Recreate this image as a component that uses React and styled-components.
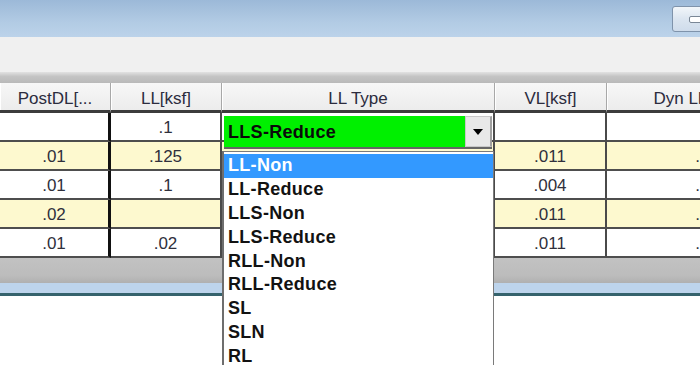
import React from 'react'
import styled, { createGlobalStyle } from 'styled-components'

const GlobalStyle = createGlobalStyle`
  html, body {
    margin: 0;
    padding: 0;
    background: #ffffff;
    overflow: hidden;
  }
  body {
    font-family: 'Liberation Sans', Arial, sans-serif;
  }
`

const columns = [
  { key: 'post', title: 'PostDL[...', width: 111, edge: '3px solid #111' },
  { key: 'll', title: 'LL[ksf]', width: 111, edge: '2px solid #4a4a4a' },
  { key: 'type', title: 'LL Type', width: 273, edge: '2px solid #4a4a4a' },
  { key: 'vl', title: 'VL[ksf]', width: 112, edge: '2px solid #4a4a4a' },
  { key: 'dyn', title: 'Dyn LL Factor', width: 200, edge: 'none' },
]

const rows = [
  { post: '', ll: '.1', type: '', vl: '', dyn: '' },
  { post: '.01', ll: '.125', type: '', vl: '.011', dyn: '.01' },
  { post: '.01', ll: '.1', type: '', vl: '.004', dyn: '.01' },
  { post: '.02', ll: '', type: '', vl: '.011', dyn: '.01' },
  { post: '.01', ll: '.02', type: '', vl: '.011', dyn: '.01' },
]

const llTypes = [
  'LL-Non',
  'LL-Reduce',
  'LLS-Non',
  'LLS-Reduce',
  'RLL-Non',
  'RLL-Reduce',
  'SL',
  'SLN',
  'RL',
]

const App = () => {
  const template = columns.map((c) => `${c.width}px`).join(' ')
  return (
    <>
      <GlobalStyle />
      <Window>
        <TitleBar>
          <MinButton>
            <Dash />
          </MinButton>
        </TitleBar>
        <Toolbar />
        <Splitter />

        <Grid $template={template}>
          {columns.map((c) => (
            <HeaderCell key={c.key} $edge={c.edge}>
              {c.title}
            </HeaderCell>
          ))}
          {rows.map((row, i) =>
            columns.map((c) => (
              <Cell key={`${i}-${c.key}`} $edge={c.edge} $alt={i % 2 === 1}>
                {row[c.key]}
              </Cell>
            ))
          )}
        </Grid>

        <GridFooter />
        <BlueStrip />

        {/* cell editor for LL Type, open */}
        <Combo>
          <ComboValue>LLS-Reduce</ComboValue>
          <ComboArrow>
            <svg width='10' height='6' viewBox='0 0 10 6'>
              <path d='M0 0 L10 0 L5 6 Z' fill='#000' />
            </svg>
          </ComboArrow>
        </Combo>
        <ListBox>
          {llTypes.map((t, i) => (
            <ListItem key={t} $active={i === 0}>
              {t}
            </ListItem>
          ))}
        </ListBox>
      </Window>
    </>
  )
}

const Window = styled.div`
  position: relative;
  width: 700px;
  height: 365px;
  overflow: hidden;
  background: #ffffff;
  display: flex;
  flex-direction: column;
`

const TitleBar = styled.div`
  height: 37px;
  flex: none;
  background: linear-gradient(#9cb9d8, #b2cbe4 60%, #bcd3ea);
  display: flex;
  justify-content: flex-end;
  align-items: flex-start;
  overflow: hidden;
`

const MinButton = styled.div`
  width: 40px;
  height: 26px;
  margin-top: 6px;
  margin-right: -12px;
  box-sizing: border-box;
  border: 1px solid #7f93ab;
  border-radius: 3px;
  background: linear-gradient(#f2f6fa, #dbe5f0 50%, #cfdceb);
  display: flex;
  align-items: center;
  padding-left: 16px;
`

const Dash = styled.div`
  width: 20px;
  height: 5px;
  border: 1px solid #7a8796;
  border-radius: 2px;
  background: #ffffff;
`

const Toolbar = styled.div`
  height: 35px;
  flex: none;
  background: #f0f0f0;
`

const Splitter = styled.div`
  height: 11px;
  flex: none;
  background: linear-gradient(#e2e2e2, #c4c4c4 40%, #b9b9b9);
`

const Grid = styled.div`
  display: grid;
  grid-template-columns: ${(p) => p.$template};
  grid-auto-rows: 29px;
  grid-template-rows: 30px;
  flex: none;
`

const HeaderCell = styled.div`
  box-sizing: border-box;
  background: linear-gradient(#f7f7f7, #ececec);
  border-right: 1px solid #a8a8a8;
  box-shadow: inset 1px 0 0 #ffffff;
  border-bottom: 3px solid #3c3c3c;
  display: flex;
  align-items: center;
  justify-content: center;
  font-size: 17px;
  color: #2c2c3e;
  white-space: nowrap;
  overflow: hidden;
  padding-top: 4px;
`

const Cell = styled.div`
  box-sizing: border-box;
  background: ${(p) => (p.$alt ? '#fdf9cf' : '#ffffff')};
  border-right: ${(p) => p.$edge};
  border-bottom: 2px solid #4e4e4e;
  display: flex;
  align-items: center;
  justify-content: center;
  font-size: 17px;
  color: #30303c;
  white-space: nowrap;
  overflow: hidden;
  padding-top: 3px;
`

const GridFooter = styled.div`
  height: 25px;
  flex: none;
  background: linear-gradient(#c2c2c2, #bcbcbc 70%, #b0b0b0);
`

const BlueStrip = styled.div`
  height: 10px;
  flex: none;
  background: #bdd4ec;
  border-bottom: 3px solid #35636d;
`

const Combo = styled.div`
  position: absolute;
  left: 224px;
  top: 116px;
  width: 268px;
  height: 33px;
  display: flex;
  box-sizing: border-box;
  border-bottom: 2px solid #666;
`

const ComboValue = styled.div`
  flex: 1;
  background: #00f000;
  font-weight: bold;
  font-size: 18px;
  color: #0a0a0a;
  letter-spacing: 0.3px;
  display: flex;
  align-items: center;
  padding-left: 4px;
  padding-top: 2px;
`

const ComboArrow = styled.div`
  width: 27px;
  box-sizing: border-box;
  background: #e8e8e8;
  border: 1px solid #c8c8c8;
  border-right: 2px solid #a0a0a0;
  display: flex;
  align-items: center;
  justify-content: center;
`

const ListBox = styled.div`
  position: absolute;
  left: 222px;
  top: 151px;
  width: 272px;
  height: 240px;
  box-sizing: border-box;
  background: #ffffff;
  border: 1px solid #7a7a7a;
  border-left: 2px solid #6e6e6e;
  padding-top: 2px;
`

const ListItem = styled.div`
  height: 23.8px;
  display: flex;
  align-items: center;
  padding-left: 4px;
  font-weight: bold;
  font-size: 18px;
  letter-spacing: 0.3px;
  background: ${(p) => (p.$active ? '#3399ff' : 'transparent')};
  color: ${(p) => (p.$active ? '#ffffff' : '#121212')};
`

export default App
